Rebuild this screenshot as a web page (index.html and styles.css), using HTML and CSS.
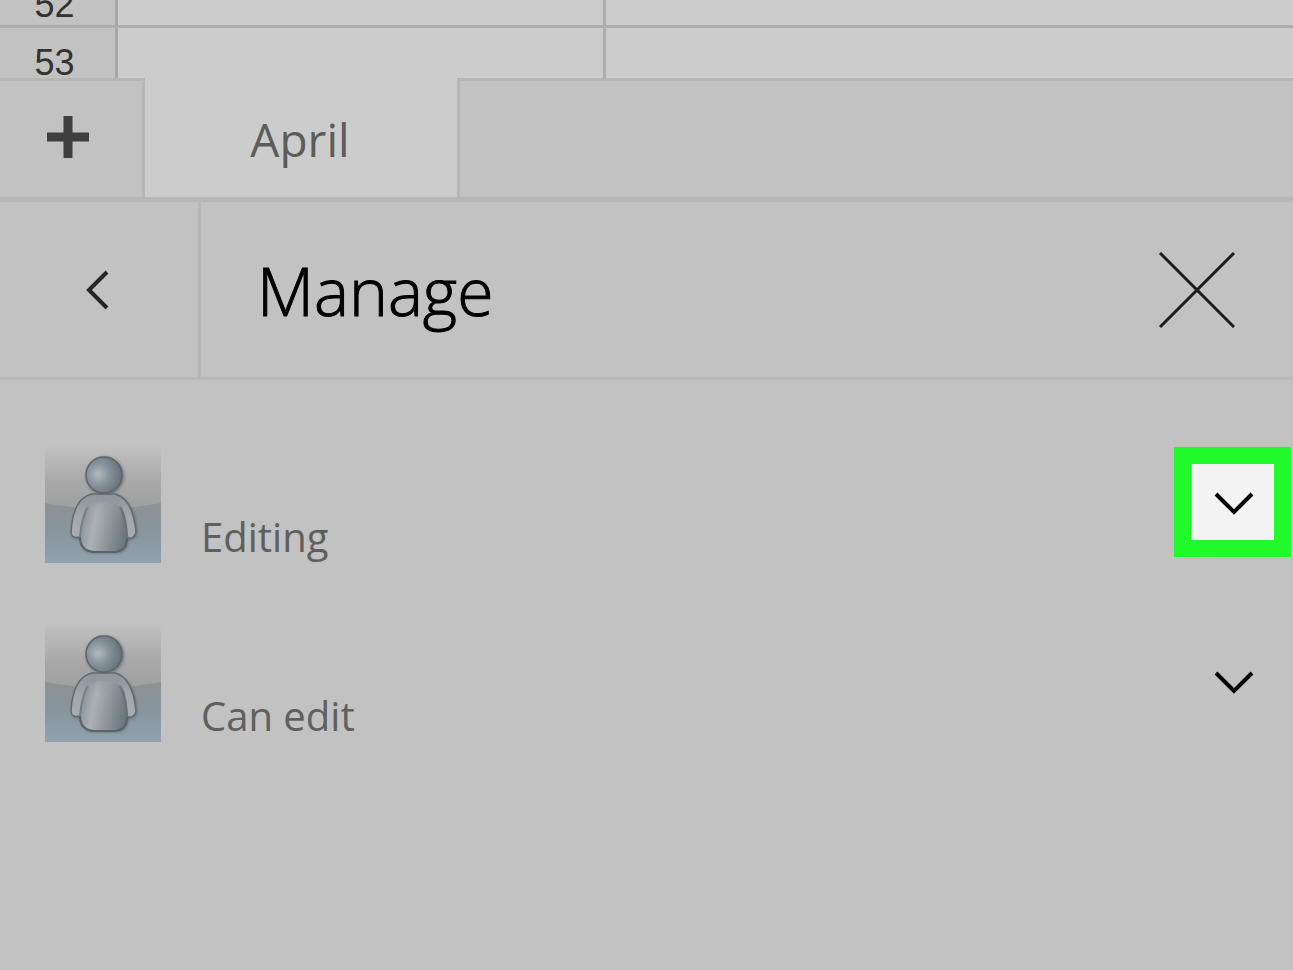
FILE: index.html
```
<!doctype html>
<html lang="en">
<head>
  <title>Manage sharing</title>
  <meta charset="utf-8">
  <meta name="viewport" content="width=device-width, initial-scale=1">
  <link rel="stylesheet" href="styles.css">
</head>
<body>
  <!-- shared avatar drawing -->
  <svg class="defs" width="0" height="0" aria-hidden="true">
    <defs>
      <linearGradient id="sky" x1="0" y1="0" x2="0" y2="1">
        <stop offset="0" stop-color="#c0c0c0"/>
        <stop offset="0.3" stop-color="#a8a8a8"/>
        <stop offset="0.5" stop-color="#a0a1a1"/>
        <stop offset="1" stop-color="#999b9e"/>
      </linearGradient>
      <linearGradient id="ground" x1="0" y1="0" x2="0" y2="1">
        <stop offset="0" stop-color="#8b9294"/>
        <stop offset="0.5" stop-color="#88959d"/>
        <stop offset="1" stop-color="#91a2ae"/>
      </linearGradient>
      <radialGradient id="head" cx="0.34" cy="0.48" r="0.68">
        <stop offset="0" stop-color="#b2babd"/>
        <stop offset="0.45" stop-color="#87939a"/>
        <stop offset="1" stop-color="#646f77"/>
      </radialGradient>
      <linearGradient id="arms" x1="0" y1="0" x2="0" y2="1">
        <stop offset="0" stop-color="#8c959a"/>
        <stop offset="0.4" stop-color="#a2a8ac"/>
        <stop offset="1" stop-color="#a9afb3"/>
      </linearGradient>
      <linearGradient id="torso" x1="0" y1="0.3" x2="1" y2="0.5">
        <stop offset="0" stop-color="#858d93"/>
        <stop offset="0.32" stop-color="#adb1b4"/>
        <stop offset="0.65" stop-color="#8d959a"/>
        <stop offset="1" stop-color="#6c767d"/>
      </linearGradient>
      <linearGradient id="chest" x1="0" y1="0" x2="0" y2="1">
        <stop offset="0" stop-color="#8f989f"/>
        <stop offset="1" stop-color="#8f989f" stop-opacity="0"/>
      </linearGradient>
      <filter id="shadow" x="-20%" y="-20%" width="140%" height="140%">
        <feGaussianBlur stdDeviation="1.8"/>
      </filter>
      <filter id="smooth" x="-10%" y="-10%" width="120%" height="120%">
        <feGaussianBlur stdDeviation="0.7"/>
      </filter>
    </defs>
    <symbol id="person" viewBox="0 0 116 116">
      <rect width="116" height="116" fill="url(#sky)"/>
      <path d="M0 56Q58 67 116 56V116H0Z" fill="url(#ground)"/>
      <g fill="#4b555d" opacity="0.65" filter="url(#shadow)">
        <circle cx="60" cy="29" r="19"/>
        <path d="M49 48C35 51 28 65 27 86Q27 93 36 92Q36 105 48 106H73Q83 105 83 93Q93 93 92 84C91 64 82 51 72 48Z"/>
      </g>
      <g filter="url(#smooth)">
        <path d="M47 47C34 50 27 64 26 86Q27 92 35 90Q35 104 49 105H69Q82 104 82 91Q90 92 91 85C89 64 82 50 70 47Z" fill="url(#arms)" stroke="#616b72" stroke-width="1.5"/>
        <path d="M41 60C37 70 35 80 35 90Q35 104 49 104H69Q82 104 82 90C81 80 80 70 76 60Q59 50 41 60Z" fill="url(#torso)"/>
        <path d="M43 60C38 68 36 78 35 90" fill="none" stroke="#747e85" stroke-width="2"/>
        <path d="M75 60C80 68 81 78 82 91" fill="none" stroke="#66717a" stroke-width="2.5"/>
        <path d="M47 48H70Q77 52 80 64Q60 72 39 64Q41 52 47 48Z" fill="url(#chest)" opacity="0.7"/>
        <path d="M35 90Q35 104 49 105H69Q82 104 82 91" fill="none" stroke="#59636a" stroke-width="2"/>
        <circle cx="59" cy="28" r="18" fill="url(#head)" stroke="#5b666e" stroke-width="1.5"/>
      </g>
    </symbol>
    <symbol id="chevron" viewBox="0 0 40 24">
      <path d="M2 2L20 20L38 2" fill="none" stroke="currentColor" stroke-width="4"/>
    </symbol>
  </svg>

  <div class="sheet">
    <table class="grid">
      <tr><th scope="row">52</th><td class="col-a"></td><td></td></tr>
      <tr><th scope="row">53</th><td class="col-a"></td><td></td></tr>
    </table>
  </div>

  <nav class="tabs">
    <button class="add" type="button" aria-label="Add sheet">
      <svg width="42" height="42" viewBox="0 0 42 42"><path d="M21 0V42M0 21H42" stroke="#3f3f3f" stroke-width="9"/></svg>
    </button>
    <button class="tab" type="button">April</button>
    <div class="tabs-rest"></div>
  </nav>

  <header class="panel-header">
    <button class="back" type="button" aria-label="Back">
      <svg width="24" height="40" viewBox="0 0 24 40"><path d="M22 2L4 20L22 38" fill="none" stroke="#252525" stroke-width="4"/></svg>
    </button>
    <h1>Manage</h1>
    <button class="close" type="button" aria-label="Close">
      <svg width="76" height="76" viewBox="0 0 76 76"><path d="M1 1L75 75M75 1L1 75" stroke="#1c1c1c" stroke-width="3"/></svg>
    </button>
  </header>

  <ul class="people">
    <li>
      <svg class="avatar" aria-hidden="true"><use href="#person"/></svg>
      <span class="role">Editing</span>
      <button class="more highlight" type="button" aria-label="Change permission">
        <svg width="40" height="24"><use href="#chevron"/></svg>
      </button>
    </li>
    <li>
      <svg class="avatar" aria-hidden="true"><use href="#person"/></svg>
      <span class="role">Can edit</span>
      <button class="more" type="button" aria-label="Change permission">
        <svg width="40" height="24"><use href="#chevron"/></svg>
      </button>
    </li>
  </ul>
</body>
</html>
```
FILE: styles.css
```
* {
  box-sizing: border-box;
}

body {
  margin: 0;
  min-height: 100vh;
  background-color: #c2c2c2;
  font-family: "Open Sans", "Noto Sans", sans-serif;
  color: #000000;
}

button {
  margin: 0;
  padding: 0;
  border: 0;
  background: none;
  color: inherit;
  font-family: inherit;
}

svg {
  display: block;
}

.defs {
  position: absolute;
}

/* spreadsheet rows, cut off above and below */
.sheet {
  height: 78px;
  overflow: hidden;
  background-color: #cccccc;
}

.grid {
  width: 100%;
  margin-top: -30px;
  border-collapse: separate;
  border-spacing: 0;
  table-layout: fixed;
}

.grid th,
.grid td {
  height: 58px;
  padding: 0;
  border-bottom: 3px solid #acaeae;
}

.grid th {
  width: 118px;
  padding-right: 6px;
  border-right: 3px solid #a6a6a6;
  background-color: #c2c2c2;
  color: #333333;
  font: 36px/40px "Liberation Sans", Arial, sans-serif;
  vertical-align: bottom;
}

.grid .col-a {
  width: 488px;
  border-right: 3px solid #acaeae;
}

/* sheet tabs */
.tabs {
  display: flex;
  height: 124px;
  border-bottom: 5px solid #b6b6b6;
}

.add {
  display: flex;
  justify-content: center;
  align-items: center;
  width: 145px;
  padding: 0 6px 4px 0;
  border-top: 3px solid #b6b6b6;
  border-right: 3px solid #b6b6b6;
}

.tab {
  width: 312px;
  padding: 2px 2px 0 0;
  background-color: #cccccc;
  color: #5c5c5c;
  font-size: 46px;
}

.tabs-rest {
  flex: 1;
  border-top: 3px solid #b6b6b6;
  border-left: 3px solid #b6b6b6;
}

/* panel header */
.panel-header {
  display: flex;
  align-items: stretch;
  height: 178px;
  border-bottom: 3px solid #b6b6b6;
}

.back {
  display: flex;
  justify-content: center;
  align-items: center;
  width: 201px;
  padding-right: 4px;
  border-right: 3px solid #b6b6b6;
}

.panel-header h1 {
  flex: 1;
  align-self: center;
  margin: 0;
  padding-left: 56px;
  font-size: 66px;
  font-weight: 300;
  line-height: 80px;
  -webkit-text-stroke: 1px #000000;
}

.close {
  padding: 0 58px;
}

/* people with access */
.people {
  display: flex;
  flex-direction: column;
  gap: 63px;
  margin: 0;
  padding: 67px 2px 0 45px;
  list-style: none;
}

.people li {
  display: flex;
}

.avatar {
  width: 116px;
  height: 116px;
}

.role {
  flex: 1;
  align-self: flex-end;
  padding-left: 40px;
  color: #5f5f5f;
  font-size: 40px;
  line-height: 52px;
}

.more {
  display: flex;
  justify-content: center;
  align-items: center;
  width: 117px;
  height: 110px;
  padding: 4px 0 0 3px;
}

.more.highlight {
  border: 17px solid #20fa2d;
  background-color: #f3f3f3;
}
```
